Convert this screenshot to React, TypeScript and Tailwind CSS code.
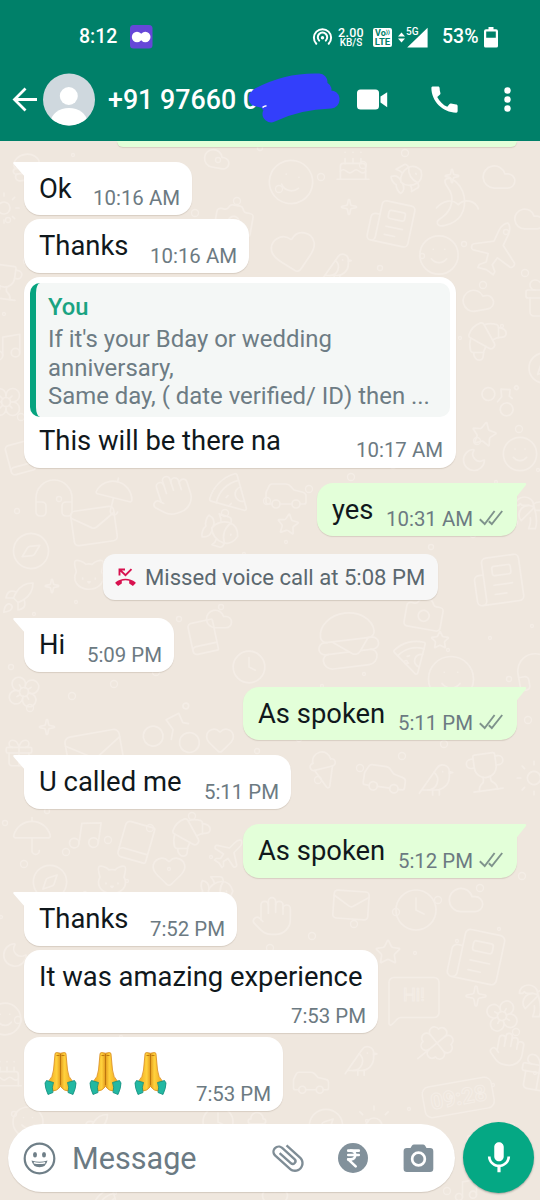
import type { ReactNode } from "react";
import {
    Banana, Bike, Bird, Book, Cake, Camera, Car, Cat, Clock, Cloud, Clover, Compass, Croissant, Fish,
    Flower, Gift, Hamburger, Hand, Headphones, Heart, IceCreamCone, IndianRupee, Mail, MessageSquare,
    Moon, Music, Newspaper, Pizza, Plane, Rocket, Smile, Sparkle, Star, Sun, TreePalm, Trophy, Umbrella,
} from "lucide-react";
import { MdAttachFile, MdCall, MdMic } from "react-icons/md";

// icon, x, y, size, rotation
const doodles: [any, number, number, number, number][] = [
    [Hamburger, 10, 150, 34, -8], [Cloud, 202, 144, 30, 10], [Camera, 212, 198, 44, 10], [Smile, 265, 156, 52, 14],
    [Cake, 334, 146, 38, 0], [Fish, 390, 160, 36, -30], [Sparkle, 444, 168, 16, 0], [Cloud, 480, 158, 38, 0],
    [Banana, 426, 174, 52, -20], [Newspaper, 366, 198, 50, 12], [Heart, 268, 226, 52, -12], [Smile, 416, 232, 46, 0],
    [Sparkle, 340, 198, 18, 0], [Plane, 466, 222, 58, -20], [Cloud, 512, 202, 34, 0], [Bird, 320, 250, 34, 0],
    [Sun, -14, 190, 36, 0], [Trophy, -16, 262, 40, 8], [Music, -10, 330, 34, 0], [Flower, -12, 384, 36, 0],
    [Cloud, 460, 282, 36, -10], [Croissant, 464, 318, 46, 0], [Gift, 520, 274, 48, 0], [Bike, 482, 372, 44, 40],
    [Compass, 526, 350, 36, 0], [Star, 470, 420, 28, 12], [Smile, 500, 434, 40, 0], [Moon, 460, 446, 28, 0],
    [Book, 2, 440, 36, -15], [Headphones, 30, 474, 48, 0], [Umbrella, 92, 474, 44, 14], [Hand, 148, 472, 46, -18],
    [Pizza, 206, 470, 44, 0], [Car, 262, 470, 48, 0], [Compass, 10, 530, 42, 12], [Mail, 68, 500, 52, -8],
    [Star, 276, 512, 24, 8], [Cat, 70, 556, 38, 0], [Sparkle, 44, 578, 16, 0], [Fish, 200, 510, 42, 18],
    [Rocket, 0, 580, 36, 0], [Camera, 402, 592, 44, 10], [Hamburger, 312, 604, 72, -7], [Newspaper, 470, 552, 56, -8],
    [TreePalm, 512, 492, 40, 0], [Pizza, 392, 634, 38, 30], [Star, 430, 630, 20, 0], [Smile, 424, 652, 54, 0],
    [Headphones, 512, 648, 46, -10], [Book, 184, 618, 38, -12], [Clock, 230, 648, 38, 0], [Cloud, 204, 604, 30, 0],
    [Bike, 140, 690, 68, 10], [Sparkle, 38, 718, 18, 0], [Mail, 62, 722, 66, -10], [Flower, 6, 674, 36, 12],
    [Heart, 204, 724, 32, 0], [Gift, 2, 736, 34, 0], [IceCreamCone, 302, 748, 44, -14], [Car, 360, 752, 50, 8],
    [Bird, 416, 760, 40, 0], [Trophy, 464, 750, 44, -8], [Sun, 514, 758, 40, 0], [Umbrella, 10, 814, 44, 0],
    [Music, 66, 816, 38, 8], [Book, 114, 820, 44, 16], [Croissant, 168, 814, 46, 0], [Plane, 210, 836, 36, 0],
    [Compass, 30, 862, 40, 0], [Cat, 94, 862, 36, 0], [Heart, 150, 852, 38, 0], [Fish, 198, 872, 38, 0],
    [Hand, 250, 894, 44, 0], [Mail, 330, 884, 42, 4], [Clock, 392, 886, 48, 0], [Cloud, 446, 880, 40, 0],
    [Newspaper, 446, 926, 60, 12], [Star, 374, 938, 28, 0], [MessageSquare, 384, 970, 60, 0], [Sparkle, 464, 984, 24, 0],
    [Flower, 484, 998, 36, -15], [TreePalm, 516, 980, 40, 0], [Clover, 416, 1022, 42, 6], [Bird, 342, 1042, 38, 0],
    [Car, 290, 1060, 42, 0], [Compass, 306, 1106, 40, 0], [Sun, 350, 1102, 48, 0], [Hand, 488, 1030, 38, 10],
    [Gift, 516, 1050, 46, 10], [Smile, -14, 1000, 38, 0], [Moon, 0, 940, 30, 0], [Cake, -10, 1056, 34, 0],
    [Smile, 10, 1104, 36, 0], [Rocket, 80, 1112, 30, 0], [Clock, 200, 1104, 36, 0], [IceCreamCone, 242, 1110, 30, 0],
    [Music, 452, 1176, 28, 0], [Pizza, 90, 1186, 32, 0], [Heart, 260, 1184, 30, 0],
];

// small filler rings between the doodles
const rings = Array.from({ length: 190 }, (_, i) => ({
    x: (i * 97 + 31) % 540,
    y: 148 + ((i * 173 + 19) % 1050),
    r: 1.5 + (i % 3),
}));

function Wallpaper() {
    return (
        <svg className="absolute inset-0 h-full w-full" viewBox="0 0 540 1200" fill="none" stroke="#f4ede6" aria-hidden="true">
            {rings.map((ring, i) => (
                <circle key={i} cx={ring.x} cy={ring.y} r={ring.r} strokeWidth="1.3" />
            ))}
            {doodles.map(([Icon, x, y, size, rotate], i) => (
                <g key={i} transform={`translate(${x} ${y}) rotate(${rotate} ${size / 2} ${size / 2})`}>
                    <Icon size={size} color="#f4ede6" strokeWidth={1.7} absoluteStrokeWidth />
                </g>
            ))}
            <text x="403" y="1001" fontSize="18" fill="none" strokeWidth="1">Hi!</text>
            <g transform="rotate(-10 458 1096)">
                <rect x="423" y="1082" width="70" height="31" rx="7" strokeWidth="1.5" />
                <text x="430" y="1105" fontSize="22" fontWeight="700" strokeWidth="1">09:28</text>
            </g>
        </svg>
    );
}

function StatusBar() {
    return (
        <div className="flex h-[72px] items-center pl-[79px] pr-[41px] pt-[2px]">
            <span className="w-[51px] text-[19.5px] font-medium leading-[24px]">8:12</span>
            <svg width="23" height="24" viewBox="0 0 23 24">
                <rect width="22.5" height="23.5" rx="3.5" fill="#6647d8" />
                <path d="M7 12h9" stroke="#fff" strokeWidth="5" />
                <circle cx="7" cy="12" r="5.2" fill="#fff" />
                <circle cx="15.3" cy="12" r="5.2" fill="#fff" />
            </svg>
            <svg className="ml-[159px]" width="21" height="20" viewBox="0 0 21 20" fill="none" stroke="#fff" strokeWidth="2" strokeLinecap="round">
                <path d="M4.3 16.7a8.6 8.6 0 1 1 12.4 0" />
                <path d="M7.2 13.6a4.7 4.7 0 1 1 6.600 0" />
                <circle cx="10.5" cy="10.8" r="1.7" fill="#fff" stroke="none" />
            </svg>
            <div className="ml-[5px] flex w-[26px] flex-col items-center">
                <span className="text-[12.5px] font-medium leading-[10px] tracking-[0.3px]">2.00</span>
                <span className="text-[10px] font-medium leading-[9px]">KB/S</span>
            </div>
            <div className="ml-[9px] flex h-[19px] w-[19px] flex-col items-center justify-center rounded-[2px] bg-white text-[#008069]">
                <span className="flex text-[9px] font-bold leading-[9px]">
                    Vo<span className="text-[6px] leading-[6px]">))</span>
                </span>
                <span className="text-[9.5px] font-bold leading-[8px]">LTE</span>
            </div>
            <div className="relative ml-[6px] h-[21px] w-[30px]">
                <svg width="30" height="21" viewBox="0 0 30 21" fill="#fff">
                    <path d="M0 9.4l3.5-4 3.5 4zM0 11.4l3.5 4 3.5-4zM9.2 20.5H29.6V.8z" />
                </svg>
                <span className="absolute left-[8px] top-0 text-[10px] font-medium leading-[9px]">5G</span>
            </div>
            <span className="ml-[14px] w-[42px] text-[19.5px] font-medium leading-[24px]">53%</span>
            <svg width="14" height="21" viewBox="0 0 14 21">
                <path d="M4.5 0h5v2.2H12a2 2 0 0 1 2 2V19a1.6 1.6 0 0 1-1.6 1.6H1.6A1.6 1.6 0 0 1 0 19V4.2a2 2 0 0 1 2-2h2.5zM2.2 4.6v6.2h9.6V4.6z" fill="#fff" fillRule="evenodd" />
            </svg>
        </div>
    );
}

function ChatHeader() {
    return (
        <div className="relative flex h-[69px] items-center pb-[14px]">
            <svg className="ml-[12px]" width="26" height="26" viewBox="0 0 26 26" fill="none" stroke="#fff" strokeWidth="2.8">
                <path d="M25 12.5H3M13.500 1.500L2.500 12.500l11 11" />
            </svg>
            <svg className="ml-[5px]" width="52" height="53" viewBox="0 0 52 53">
                <clipPath id="avatar"><circle cx="26" cy="26.5" r="26" /></clipPath>
                <g clipPath="url(#avatar)">
                    <rect width="52" height="53" fill="#cfd8de" />
                    <circle cx="25.8" cy="23" r="9" fill="#fff" />
                    <ellipse cx="26" cy="49" rx="18" ry="14" fill="#fff" />
                </g>
            </svg>
            <span className="ml-[13px] w-[249px] whitespace-nowrap text-[26.8px] font-medium leading-[32px]">+91 97660 0</span>
            <svg className="absolute left-[245px] top-[1px]" width="96" height="52" viewBox="0 0 96 52">
                <path d="M14 23Q42 8 74 9M12 25Q34 32 86 26M26 41Q52 28 86 27M24 31L78 17" fill="none" stroke="#333ffb" strokeWidth="17" strokeLinecap="round" strokeLinejoin="round" />
                <path d="M17.500 34.500q1.500-1.500 4-1.800" fill="none" stroke="#fff" strokeWidth="1.600" />
            </svg>
            <svg width="31" height="21" viewBox="0 0 31 21" fill="#fff">
                <rect x="0" y="0.5" width="22" height="20" rx="3.5" />
                <path d="M23.5 7.500L30.200 3.200V18.200L23.500 13.500z" />
            </svg>
            <MdCall className="ml-[39px]" size={35} />
            <svg className="ml-[42px]" width="7" height="26" viewBox="0 0 7 26" fill="#fff">
                <circle cx="3.5" cy="3.5" r="3.2" />
                <circle cx="3.5" cy="12.5" r="3.2" />
                <circle cx="3.5" cy="21.5" r="3.2" />
            </svg>
        </div>
    );
}

function Ticks() {
    return (
        <svg className="mb-[10px] ml-[6px]" width="24" height="16" viewBox="0 0 24 16" fill="none" stroke="#7f938c" strokeWidth="1.9">
            <path d="M.8 9.3L5.700 14 15.600 1M9.800 11.200l3 2.800L23.200 1" />
        </svg>
    );
}

type BubbleProps = { text: ReactNode; time: string; className: string; out?: boolean; tail?: boolean };

function Bubble({ text, time, className, out, tail }: BubbleProps) {
    const side = out ? "self-end mr-[23px] bg-[#e3ffd9] pr-[14px]" : "ml-[24px] bg-white pr-[12px]";
    const corner = !tail ? "" : out ? "rounded-tr-none" : "rounded-tl-none";
    return (
        <div className={`relative flex shrink-0 justify-between rounded-[16px] pl-[15px] shadow-[0_1px_1px_rgba(70,50,30,0.14)] ${side} ${corner} ${className}`}>
            {tail && !out && (
                <svg className="absolute -left-[11px] top-0" width="12" height="16" viewBox="0 0 12 16" fill="#fff">
                    <path d="M12 0H1.5C.2 0-.1 1 .7 2L11.200 14V16H12z" />
                </svg>
            )}
            {tail && out && (
                <svg className="absolute -right-[10px] top-0" width="11" height="16" viewBox="0 0 11 16" fill="#e3ffd9">
                    <path d="M0 0H9C10.3 0 10.600 1 9.900 2L.8 13.500V16H0z" />
                </svg>
            )}
            <span className="whitespace-nowrap pt-[12px] text-[27.4px] leading-[30px] text-[#10181c]">{text}</span>
            <div className="flex items-end self-end">
                <span className="whitespace-nowrap pb-[7px] text-[20.4px] leading-[20px] text-[#6c7a82]">{time}</span>
                {out && <Ticks />}
            </div>
        </div>
    );
}

function QuotedBubble() {
    return (
        <div className="ml-[24px] mt-[4px] h-[191px] w-[432px] shrink-0 rounded-[16px] bg-white px-[6px] pt-[6px] shadow-[0_1px_1px_rgba(70,50,30,0.14)]">
            <div className="h-[134px] overflow-hidden rounded-[10px] border-l-[6px] border-[#06a37f] bg-[#f4f7f6] pl-[12px] pt-[10px]">
                <div className="text-[23.8px] font-medium leading-[29px] text-[#1aa382]">You</div>
                <div className="mt-[3px] whitespace-nowrap text-[23.9px] leading-[28.7px] text-[#6d7c84]">
                    If it's your Bday or wedding<br />anniversary,<br />Same day, ( date verified/ ID) then ...
                </div>
            </div>
            <div className="flex justify-between pl-[9px] pr-[7px]">
                <span className="pt-[9px] text-[27.4px] leading-[30px] text-[#10181c]">This will be there na</span>
                <span className="pt-[23px] text-[20.4px] leading-[20px] text-[#6c7a82]">10:17 AM</span>
            </div>
        </div>
    );
}

function MissedCall() {
    return (
        <div className="ml-[103px] mt-[18px] flex h-[46px] w-[335px] shrink-0 items-center rounded-[12px] bg-[#f7f7f7] pl-[12px] shadow-[0_1px_1px_rgba(70,50,30,0.16)]">
            <svg width="21" height="19" viewBox="0 0 21 19" fill="none" stroke="#d8114f">
                <path d="M4.5 7.500V1.500H10M4.800 1.800l5.700 5.400 6-6" strokeWidth="1.9" />
                <path d="M.6 14.3C6 9.600 15 9.600 20.400 14.300c.4.4.4.8 0 1.200l-2 2.100c-.4.4-.8.4-1.200 0l-3-2.200v-2.600c-2.400-.9-5-.9-7.400 0v2.600l-3 2.200c-.4.4-.8.4-1.200 0l-2-2.100c-.4-.4-.4-.8 0-1.200z" fill="#d8114f" stroke="none" />
            </svg>
            <span className="ml-[9px] whitespace-nowrap text-[22.1px] leading-[28px] text-[#5b686f]">Missed voice call at 5:08 PM</span>
        </div>
    );
}

function FoldedHands() {
    return (
        <svg width="33" height="43" viewBox="0 0 33 43" role="img" aria-label="🙏">
            <defs>
                <linearGradient id="skin" x1="0" x2="1">
                    <stop offset="0" stopColor="#f0a51c" />
                    <stop offset="0.35" stopColor="#ffd23d" />
                    <stop offset="0.5" stopColor="#e39a1c" />
                    <stop offset="0.65" stopColor="#ffd23d" />
                    <stop offset="1" stopColor="#f0a51c" />
                </linearGradient>
            </defs>
            <path d="M11 2Q11 .5 13 .6L16.500 1.200 20 .6Q22 .5 22 2L23.500 18Q24 25 29 30L24 39Q20 39 16.500 34.500 13 39 9 39L4 30Q9 25 9.500 18z" fill="url(#skin)" stroke="#d98c1d" strokeWidth="0.8" />
            <path d="M16.5 2V33M12.500 3.500h3M17.500 3.500h3" stroke="#b8720f" strokeWidth="0.9" fill="none" />
            <path d="M2.5 28.500L9.500 30.500Q7.500 35 9 40.500L4 42.500Q1 36 1 31z" fill="#22b8a2" stroke="#128d7c" strokeWidth="0.8" />
            <path d="M30.5 28.500L23.500 30.500Q25.500 35 24 40.500L29 42.500Q32 36 32 31z" fill="#22b8a2" stroke="#128d7c" strokeWidth="0.8" />
        </svg>
    );
}

function Composer() {
    return (
        <div className="relative mt-[11px] flex shrink-0 items-center pl-[8px]">
            <div className="flex h-[68px] w-[447px] items-center rounded-full bg-white pl-[15px] pt-[1px] shadow-[0_1px_1px_rgba(70,50,30,0.16)]">
                <svg width="33" height="33" viewBox="0 0 33 33" fill="none" stroke="#6f7f88" strokeWidth="2.2">
                    <circle cx="16.5" cy="16.5" r="14.8" />
                    <ellipse cx="12" cy="12.7" rx="2" ry="2.7" fill="#6f7f88" stroke="none" />
                    <ellipse cx="21" cy="12.7" rx="2" ry="2.7" fill="#6f7f88" stroke="none" />
                    <path d="M8.5 18.500Q16.500 21 24.500 18.500Q23 25.300 16.500 25.300T8.500 18.500z" fill="#6f7f88" stroke="none" />
                    <path d="M10.8 20.700Q16.500 22 22.200 20.700" stroke="#fff" strokeWidth="1.4" />
                </svg>
                <span className="ml-[16px] w-[197px] pt-[2px] text-[30.6px] leading-[36px] text-[#6b7a83]">Message</span>
                <MdAttachFile className="-rotate-[48deg] text-[#7f8d96]" size={38} />
                <div className="ml-[31px] flex h-[30px] w-[30px] items-center justify-center rounded-full bg-[#82919b] text-white">
                    <IndianRupee size={21} strokeWidth={3} />
                </div>
                <svg className="ml-[35px]" width="31" height="29" viewBox="0 0 31 29" fill="#82919b">
                    <path fillRule="evenodd" d="M11 .5h9q1.200 0 2 1L23.500 4H27q3.300 0 3.300 3.300V24.700Q30.300 28 27 28H3.900Q.6 28 .6 24.700V7.300Q.6 4 3.900 4H7.500L9 1.500q.8-1 2-1zM15.500 7.300a7.700 7.700 0 1 0 0 15.400 7.700 7.700 0 0 0 0-15.400zM15.500 10a5 5 0 1 1 0 10 5 5 0 0 1 0-10z" />
                </svg>
            </div>
            <div className="ml-[8px] flex h-[71px] w-[71px] items-center justify-center rounded-full bg-[#05a884] text-white shadow-[0_1px_2px_rgba(0,0,0,0.3)]">
                <MdMic size={38} />
            </div>
        </div>
    );
}

export default function App() {
    return (
        <main className="relative flex h-[1200px] w-[540px] flex-col overflow-hidden bg-[#efe7de] font-[Roboto,sans-serif]">
            <Wallpaper />
            <header className="relative h-[141px] shrink-0 bg-[#008069] text-white">
                <StatusBar />
                <ChatHeader />
            </header>

            {/* Conversation */}
            <section className="relative flex flex-col">
                <div className="ml-[117px] h-[6px] w-[400px] shrink-0 rounded-b-[16px] bg-[#e3ffd9] shadow-[0_1px_1px_rgba(70,50,30,0.14)]" />
                <Bubble text="Ok" time="10:16 AM" tail className="mt-[15px] h-[53px] w-[168px]" />
                <Bubble text="Thanks" time="10:16 AM" className="mt-[4px] h-[54px] w-[225px]" />
                <QuotedBubble />
                <Bubble text="yes" time="10:31 AM" out tail className="mt-[15px] h-[53px] w-[200px]" />
                <MissedCall />
                <Bubble text="Hi" time="5:09 PM" tail className="mt-[18px] h-[54px] w-[150px]" />
                <Bubble text="As spoken" time="5:11 PM" out tail className="mt-[15px] h-[53px] w-[274px]" />
                <Bubble text="U called me" time="5:11 PM" tail className="mt-[15px] h-[54px] w-[267px]" />
                <Bubble text="As spoken" time="5:12 PM" out tail className="mt-[15px] h-[54px] w-[274px]" />
                <Bubble text="Thanks" time="7:52 PM" tail className="mt-[14px] h-[54px] w-[213px]" />
                <div className="ml-[24px] mt-[4px] flex h-[83px] w-[354px] shrink-0 flex-col rounded-[16px] bg-white pl-[15px] pr-[12px] pt-[12px] shadow-[0_1px_1px_rgba(70,50,30,0.14)]">
                    <span className="whitespace-nowrap text-[27.4px] leading-[30px] text-[#10181c]">It was amazing experience</span>
                    <span className="mt-[14px] self-end text-[20.4px] leading-[20px] text-[#6c7a82]">7:53 PM</span>
                </div>
                <div className="ml-[24px] mt-[4px] flex h-[74px] w-[259px] shrink-0 items-end justify-between rounded-[16px] bg-white pl-[20px] pr-[12px] shadow-[0_1px_1px_rgba(70,50,30,0.14)]">
                    <div className="flex gap-[12px] pb-[16px]">
                        <FoldedHands />
                        <FoldedHands />
                        <FoldedHands />
                    </div>
                    <span className="pb-[7px] text-[20.4px] leading-[20px] text-[#6c7a82]">7:53 PM</span>
                </div>
                <Composer />
            </section>
        </main>
    );
}
